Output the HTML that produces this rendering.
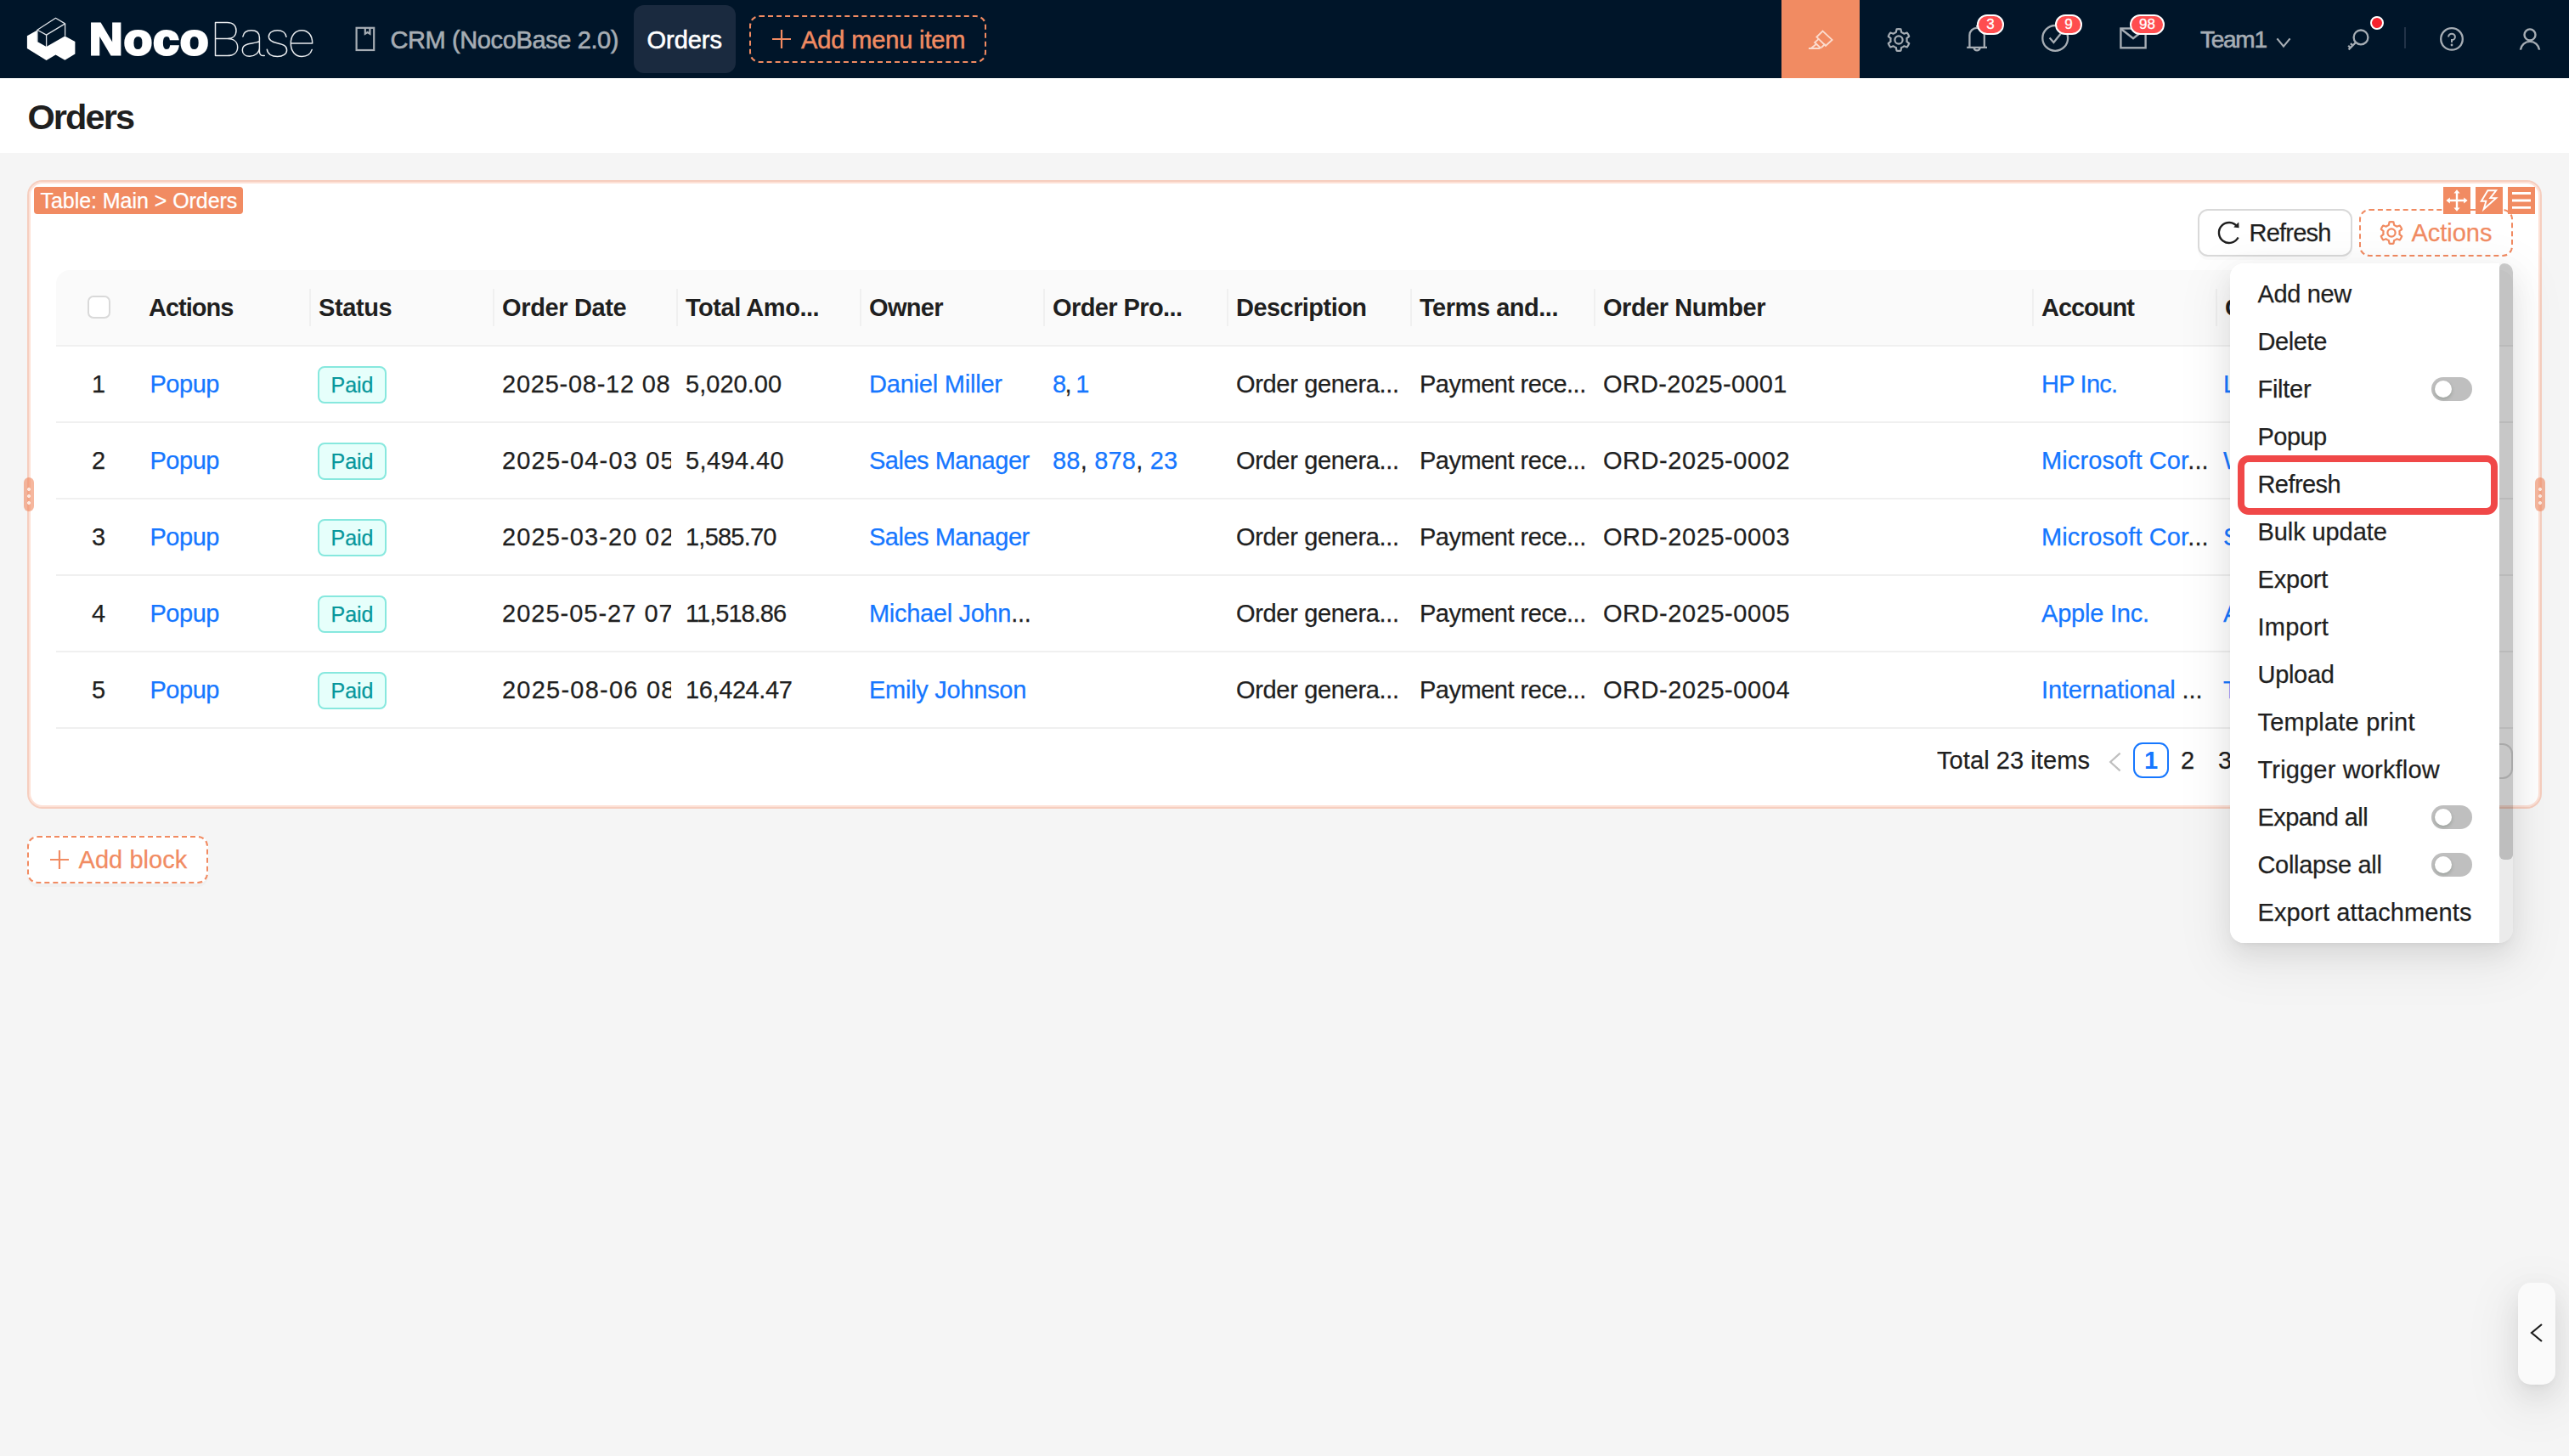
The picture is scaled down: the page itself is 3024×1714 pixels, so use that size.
<!DOCTYPE html>
<html lang="en">
<head>
<meta charset="utf-8">
<title>Orders - NocoBase</title>
<style>
*{box-sizing:border-box;margin:0;padding:0}
html,body{width:3024px;height:1714px;overflow:hidden;background:#f5f5f5;font-family:"Liberation Sans",sans-serif;color:#1f1f1f}
.abs{position:absolute}
.t{position:absolute;white-space:nowrap;-webkit-text-stroke:.25px currentColor}
#hdr{position:absolute;left:0;top:0;width:3024px;height:92px;background:#001529}
.bdg{-webkit-text-stroke:.3px #fff;position:absolute;top:17px;height:24px;border-radius:12px;background:#ff4d4f;border:2px solid #fff;color:#fff;font-size:17px;line-height:20px;text-align:center}
#titlebar{position:absolute;left:0;top:92px;width:3024px;height:88px;background:#fff}
#block{position:absolute;left:32px;top:212px;width:2960px;height:740px;background:#fff;border:2px solid #f6cebf;box-shadow:inset 0 0 0 2px #fde1d6;border-radius:18px}
#tbl{position:absolute;left:66px;top:318px;width:2892px;height:540px;overflow:hidden;border-radius:16px 16px 0 0}
#thead{position:absolute;left:0;top:0;width:2892px;height:90px;background:#fafafa;border-bottom:2px solid #f0f0f0}
.row{position:absolute;left:0;width:2892px;height:90px;border-bottom:2px solid #f0f0f0;background:#fff}
.div{position:absolute;top:22px;width:2px;height:44px;background:#f0f0f0}
.c{position:absolute;white-space:nowrap;overflow:hidden;-webkit-text-stroke:.25px currentColor}
.lnk{color:#1677ff}
.tag{position:absolute;left:308px;top:23px;width:81px;height:44px;border:2px solid #87e8de;background:#e6fffb;border-radius:8px}
#dd{position:absolute;left:2625px;top:310px;width:317px;height:800px;background:#fff;border-radius:16px 0 0 16px;overflow:hidden}
#ddsh{position:absolute;left:2625px;top:310px;width:333px;height:800px;border-radius:16px;box-shadow:0 12px 32px 0 rgba(0,0,0,.08),0 6px 12px -8px rgba(0,0,0,.12),0 18px 56px 16px rgba(0,0,0,.05)}
.sw{position:absolute;left:237px;width:48px;height:28px;border-radius:14px;background:#bfbfbf}
.sw i{position:absolute;left:4px;top:4px;width:20px;height:20px;border-radius:10px;background:#fff;box-shadow:0 2px 4px rgba(0,35,11,.2)}
.hdl{position:absolute;top:562px;width:12px;height:40px;border-radius:6px;background-color:rgba(241,139,98,.62);background-image:radial-gradient(circle 2.2px at 6px 14px,rgba(255,255,255,.75) 85%,transparent),radial-gradient(circle 2.2px at 6px 22px,rgba(255,255,255,.75) 85%,transparent),radial-gradient(circle 2.2px at 6px 30px,rgba(255,255,255,.75) 85%,transparent)}
</style>
</head>
<body>
<div id="hdr">
<svg class="abs" style="left:0;top:0" width="400" height="92" viewBox="0 0 400 92">
<polygon fill="#fff" points="31.9,42.3 43.9,35.4 43.9,48.9 54.6,55 76.4,42.5 88.4,49.1 88.4,63.4 76.4,70.8 65.5,64.6 54.6,71 31.9,57"/>
<g fill="none" stroke="#dfe3e8" stroke-width="1.3" stroke-linejoin="round"><path d="M43.9 35.2 65.5 21.3 76.6 27.9 54.6 41.1Z"/><path d="M54.6 41.1V55M76.6 27.9V42.6M43.9 35.2V48.9"/></g>
<g fill="none" stroke="#e9ecef" stroke-width="1.5" stroke-linecap="round" stroke-linejoin="round">
<path d="M253.5 26.4V65.6M253.5 26.4H267.5C274 26.4 278 30.2 278 36 278 41.8 274 45.6 267.5 45.6H253.5M267.5 45.6C275 45.6 279.7 49.4 279.7 55.6 279.7 61.8 275 65.6 267.5 65.6H253.5"/>
<path d="M285.9 43C286.6 38.4 290.4 35.7 295.8 35.7 301.8 35.7 305.4 38.8 305.4 44.2V60.5C305.4 64 307 65.9 311.3 65.4M305.4 48.6C301.5 50.6 296 50.8 291.5 52 287.4 53.1 285.3 55.4 285.3 58.9 285.3 63.3 288.6 66.2 293.8 66.2 299.8 66.2 305.4 62.3 305.4 56"/>
<path d="M337 43.3C336.4 38.7 332.4 35.7 326.6 35.7 320.5 35.7 316.3 38.7 316.3 43.2 316.3 47.4 319.4 49.3 326.2 50.7 333.9 52.3 337.6 54.2 337.6 59 337.6 63.5 333.2 66.5 326.6 66.5 319.6 66.5 314.9 63.3 314.3 58.2"/>
<path d="M342.3 50.9H367.7C367.7 41.7 362.7 35.7 355.1 35.7 347.4 35.7 342.3 41.9 342.3 51.1 342.3 60.3 347.4 66.5 355.3 66.5 361.3 66.5 365.7 63.4 367.2 58.4"/>
</g></svg>
<div class="t" id="t1" style="left:104.8px;top:18px;font-size:51.5px;line-height:53.5px;color:#fff;font-weight:bold;-webkit-text-stroke:0;line-height:56px;-webkit-text-stroke:3px #fff;transform-origin:0 0;transform:scaleX(1.06);letter-spacing:1.2px;">Noco</div>
<svg class="abs" style="left:416px;top:30px" width="28" height="32" viewBox="0 0 28 32"><g fill="none" stroke="#a6adb4" stroke-width="2.2"><rect x="3.6" y="2.8" width="20.6" height="26.2"/><path d="M13.8 3V9.8L16.6 8 19.4 9.8V3"/></g></svg>
<div class="t" id="t2" style="left:459.5px;top:32px;font-size:29px;line-height:31px;color:#a6adb4;letter-spacing:-0.39px;-webkit-text-stroke:.6px;">CRM (NocoBase 2.0)</div>
<div class="abs" style="left:746px;top:6px;width:120px;height:80px;border-radius:12px;background:#1a2a3f"></div>
<div class="t" id="t3" style="left:761.5px;top:32px;font-size:29px;line-height:31px;color:#fff;letter-spacing:-0.03px;-webkit-text-stroke:.6px;">Orders</div>
<div class="abs" style="left:882px;top:18px;width:279px;height:56px;border:2px dashed #f18b62;border-radius:12px"></div>
<svg class="abs" style="left:906px;top:32px" width="28" height="28" viewBox="0 0 28 28"><path d="M14 3V25M3 14H25" stroke="#f18b62" stroke-width="2.2" fill="none"/></svg>
<div class="t" id="t4" style="left:943px;top:32px;font-size:29px;line-height:31px;color:#f18b62;letter-spacing:-0.13px;-webkit-text-stroke:.5px;">Add menu item</div>
<div class="abs" style="left:2097px;top:0;width:92px;height:92px;background:#f18b62"></div>
<svg class="abs" style="left:2124px;top:30px" width="36" height="32" viewBox="2124 30 36 32"><g fill="none" stroke="#fbdccf" stroke-width="1.9" stroke-linejoin="miter"><path d="M2145.6 36.6 2156.6 46.9 2149 54 2138.4 43.6Z"/><path d="M2140.8 45.9 2136.2 50 2143.6 57"/><path d="M2148.4 51.6 2144 56"/><path d="M2138.2 51.8 2131.6 57M2129 57H2142"/></g></svg>
<svg class="abs" style="left:2221px;top:33px" width="28" height="28" viewBox="0 0 28 28"><g fill="none" stroke="#a6adb4" stroke-width="2.2" stroke-linejoin="round"><path d="M17.13 4.92L16.46 1.34A12.90 12.90 0 0 0 11.54 1.34L10.87 4.92A9.60 9.60 0 0 0 7.70 6.75L4.26 5.54A12.90 12.90 0 0 0 1.80 9.80L4.58 12.17A9.60 9.60 0 0 0 4.58 15.83L1.80 18.20A12.90 12.90 0 0 0 4.26 22.46L7.70 21.25A9.60 9.60 0 0 0 10.87 23.08L11.54 26.66A12.90 12.90 0 0 0 16.46 26.66L17.13 23.08A9.60 9.60 0 0 0 20.30 21.25L23.74 22.46A12.90 12.90 0 0 0 26.20 18.20L23.42 15.83A9.60 9.60 0 0 0 23.42 12.17L26.20 9.80A12.90 12.90 0 0 0 23.74 5.54L20.30 6.75A9.60 9.60 0 0 0 17.13 4.92Z"/><circle cx="14" cy="14" r="4.6"/></g></svg>
<svg class="abs" style="left:2312px;top:26px" width="32" height="38" viewBox="2312 26 32 38"><g fill="none" stroke="#a6adb4" stroke-width="2.3"><path d="M2315.2 55.8H2339M2318.4 55.8V41.5A8.7 8.7 0 0 1 2335.8 41.5V55.8M2327.1 32.8V29.6"/><path d="M2323.6 56.5A3.6 3.8 0 0 0 2330.6 56.5"/></g></svg>
<div class="bdg" style="left:2327px;width:32px">3</div>
<svg class="abs" style="left:2400px;top:26px" width="38" height="38" viewBox="2400 26 38 38"><g fill="none" stroke="#a6adb4" stroke-width="2.3"><circle cx="2419.2" cy="44.9" r="14.9"/><path d="M2412.6 44.6 2417.4 50 2425.6 39.8"/></g></svg>
<div class="bdg" style="left:2419px;width:32px">9</div>
<svg class="abs" style="left:2492px;top:28px" width="38" height="34" viewBox="2492 28 38 34"><g fill="none" stroke="#a6adb4" stroke-width="2.4"><rect x="2496.4" y="33.5" width="29.2" height="22.8"/><path d="M2497 34.3 2511 45.3 2525 34.3"/></g></svg>
<div class="bdg" style="left:2507px;width:41px">98</div>
<div class="t" id="t5" style="left:2590px;top:32px;font-size:28px;line-height:30px;color:#a6adb4;letter-spacing:-1.26px;-webkit-text-stroke:.6px;">Team1</div>
<svg class="abs" style="left:2676px;top:40px" width="24" height="20" viewBox="2676 40 24 20"><path d="M2680.4 45.4 2688 54.6 2695.6 45.4" fill="none" stroke="#a6adb4" stroke-width="2.2"/></svg>
<svg class="abs" style="left:2760px;top:30px" width="34" height="34" viewBox="2760 30 34 34"><g fill="none" stroke="#a6adb4" stroke-width="2.3"><circle cx="2779" cy="43.9" r="8.4"/><path d="M2773 50 2764.6 58.4M2769.4 53.6 2766.9 51.1M2766.7 56.3 2764.2 53.8"/></g></svg>
<div class="abs" style="left:2790px;top:19px;width:16px;height:16px;border-radius:8px;background:#f5222d;border:2px solid #fff"></div>
<div class="abs" style="left:2830px;top:32px;width:2px;height:25px;background:#213247"></div>
<svg class="abs" style="left:2870px;top:30px" width="32" height="32" viewBox="2870 30 32 32"><g fill="none" stroke="#a6adb4" stroke-width="2.3"><circle cx="2886" cy="45.9" r="12.8"/><path d="M2882.1 43.4A3.9 3.7 0 1 1 2886 47.1V50" stroke-width="2"/></g><circle cx="2886" cy="53" r="1.4" fill="#a6adb4"/></svg>
<svg class="abs" style="left:2962px;top:30px" width="32" height="32" viewBox="2962 30 32 32"><g fill="none" stroke="#a6adb4" stroke-width="2.4"><circle cx="2978" cy="40.9" r="6.5"/><path d="M2966.9 58.6A11.2 11.2 0 0 1 2989.1 58.6"/></g></svg>
</div>
<div id="titlebar"></div>
<div class="t" id="t6" style="left:32.5px;top:115.5px;font-size:41.5px;line-height:43.5px;color:#1f1f1f;font-weight:bold;-webkit-text-stroke:0;letter-spacing:-1.92px;">Orders</div>
<div id="block"></div>
<div class="abs" style="left:40px;top:220px;width:246px;height:32px;background:#f18b62;border-radius:4px"></div>
<div class="t" id="t7" style="left:47.5px;top:223px;font-size:25px;line-height:27px;color:#fff;letter-spacing:-0.05px;">Table: Main &gt; Orders</div>
<div class="abs" style="left:2586.5px;top:246px;width:182.5px;height:56px;border:2px solid #d9d9d9;border-radius:12px;background:#fff;box-shadow:0 4px 0 rgba(0,0,0,.02)"></div>
<svg class="abs" style="left:2608px;top:258px" width="32" height="32" viewBox="0 0 32 32"><g fill="none" stroke="#1f1f1f" stroke-width="2.4"><path d="M26.6 21.5A12 12 0 1 1 25.4 8.6"/></g><path d="M21.2 9.4 27.6 10.2 27.2 3.6Z" fill="#1f1f1f"/></svg>
<div class="t" id="t8" style="left:2647.5px;top:259px;font-size:29px;line-height:31px;color:#1f1f1f;letter-spacing:-0.79px;">Refresh</div>
<div class="abs" style="left:2777px;top:246px;width:181px;height:56px;border:2px dashed #f18b62;border-radius:12px;background:#fff"></div>
<svg class="abs" style="left:2801px;top:260px" width="28" height="28" viewBox="0 0 28 28"><g fill="none" stroke="#f18b62" stroke-width="2.2" stroke-linejoin="round"><path d="M17.13 4.92L16.46 1.34A12.90 12.90 0 0 0 11.54 1.34L10.87 4.92A9.60 9.60 0 0 0 7.70 6.75L4.26 5.54A12.90 12.90 0 0 0 1.80 9.80L4.58 12.17A9.60 9.60 0 0 0 4.58 15.83L1.80 18.20A12.90 12.90 0 0 0 4.26 22.46L7.70 21.25A9.60 9.60 0 0 0 10.87 23.08L11.54 26.66A12.90 12.90 0 0 0 16.46 26.66L17.13 23.08A9.60 9.60 0 0 0 20.30 21.25L23.74 22.46A12.90 12.90 0 0 0 26.20 18.20L23.42 15.83A9.60 9.60 0 0 0 23.42 12.17L26.20 9.80A12.90 12.90 0 0 0 23.74 5.54L20.30 6.75A9.60 9.60 0 0 0 17.13 4.92Z"/><circle cx="14" cy="14" r="4.6"/></g></svg>
<div class="t" id="t9" style="left:2838.5px;top:259px;font-size:29px;line-height:31px;color:#f18b62;letter-spacing:-0.02px;">Actions</div>
<div class="abs" style="left:2876px;top:220px;width:32px;height:32px;background:#f18b62"></div>
<div class="abs" style="left:2914px;top:220px;width:32px;height:32px;background:#f18b62"></div>
<div class="abs" style="left:2952px;top:220px;width:32px;height:32px;background:#f18b62"></div>
<svg class="abs" style="left:2876px;top:220px" width="108" height="32" viewBox="2876 220 108 32"><g fill="none" stroke="#fff" stroke-width="2.4"><path d="M2892 226V246M2882 236H2902"/><path d="M2920.8 236.8 2928.4 224.3H2938.2L2931.3 233.1H2938.2L2923.6 246.2 2926.4 236.8Z" stroke-width="1.9"/><path d="M2957 227.5H2979M2957 236H2979M2957 244.4H2979" stroke-width="2.8"/></g><path d="M2892 223.2 2895.6 227.6H2888.4ZM2892 248.8 2895.6 244.4H2888.4ZM2879.4 236 2883.8 232.4V239.6ZM2904.6 236 2900.2 232.4V239.6Z" fill="#fff"/></svg>
<div id="tbl"><div id="thead">
<div class="t" id="t10" style="left:109px;top:29px;font-size:29px;line-height:31px;color:#1f1f1f;font-weight:bold;-webkit-text-stroke:0;letter-spacing:-1.01px;">Actions</div>
<div class="t" id="t11" style="left:309px;top:29px;font-size:29px;line-height:31px;color:#1f1f1f;font-weight:bold;-webkit-text-stroke:0;letter-spacing:-0.41px;">Status</div>
<div class="div" style="left:298px"></div>
<div class="t" id="t12" style="left:525px;top:29px;font-size:29px;line-height:31px;color:#1f1f1f;font-weight:bold;-webkit-text-stroke:0;letter-spacing:-0.35px;">Order Date</div>
<div class="div" style="left:514px"></div>
<div class="t" id="t13" style="left:741px;top:29px;font-size:29px;line-height:31px;color:#1f1f1f;font-weight:bold;-webkit-text-stroke:0;letter-spacing:-0.46px;">Total Amo...</div>
<div class="div" style="left:730px"></div>
<div class="t" id="t14" style="left:957px;top:29px;font-size:29px;line-height:31px;color:#1f1f1f;font-weight:bold;-webkit-text-stroke:0;letter-spacing:-0.66px;">Owner</div>
<div class="div" style="left:946px"></div>
<div class="t" id="t15" style="left:1173px;top:29px;font-size:29px;line-height:31px;color:#1f1f1f;font-weight:bold;-webkit-text-stroke:0;letter-spacing:-0.59px;">Order Pro...</div>
<div class="div" style="left:1162px"></div>
<div class="t" id="t16" style="left:1389px;top:29px;font-size:29px;line-height:31px;color:#1f1f1f;font-weight:bold;-webkit-text-stroke:0;letter-spacing:-0.55px;">Description</div>
<div class="div" style="left:1378px"></div>
<div class="t" id="t17" style="left:1605px;top:29px;font-size:29px;line-height:31px;color:#1f1f1f;font-weight:bold;-webkit-text-stroke:0;letter-spacing:-0.47px;">Terms and...</div>
<div class="div" style="left:1594px"></div>
<div class="t" id="t18" style="left:1821px;top:29px;font-size:29px;line-height:31px;color:#1f1f1f;font-weight:bold;-webkit-text-stroke:0;letter-spacing:-0.46px;">Order Number</div>
<div class="div" style="left:1810px"></div>
<div class="t" id="t19" style="left:2337px;top:29px;font-size:29px;line-height:31px;color:#1f1f1f;font-weight:bold;-webkit-text-stroke:0;letter-spacing:-1.03px;">Account</div>
<div class="div" style="left:2326px"></div>
<div class="t" id="t20" style="left:2553px;top:29px;font-size:29px;line-height:31px;color:#1f1f1f;font-weight:bold;-webkit-text-stroke:0;">Contact</div>
<div class="div" style="left:2542px"></div>
<div class="abs" style="left:37px;top:30px;width:27px;height:27px;border:2px solid #d9d9d9;border-radius:7px;background:#fff"></div>
</div>
<div class="row" style="top:90px">
<div class="t" id="t21" style="left:34px;top:29px;font-size:29px;line-height:31px;width:32px;text-align:center;">1</div>
<div class="t" id="t22" style="left:110.5px;top:29px;font-size:29px;line-height:31px;color:#1677ff;letter-spacing:-0.49px;">Popup</div>
<div class="tag"></div>
<div class="t" id="t23" style="left:308px;top:32px;font-size:25px;line-height:27px;color:#08979c;width:81px;text-align:center;">Paid</div>
<div class="c" id="t24" style="left:525px;top:29px;font-size:29px;line-height:31px;width:198.5px;letter-spacing:0.75px;">2025-08-12 08:00:00</div>
<div class="t" id="t25" style="left:741px;top:29px;font-size:29px;line-height:31px;letter-spacing:0.04px;">5,020.00</div>
<div class="t" id="t26" style="left:957px;top:29px;font-size:29px;line-height:31px;color:#1677ff;letter-spacing:-0.21px;">Daniel Miller</div>
<div class="t" id="t27" style="left:1173px;top:29px;font-size:29px;line-height:31px;letter-spacing:-1.67px;"><span class="lnk">8</span>, <span class="lnk">1</span></div>
<div class="t" id="t28" style="left:1389px;top:29px;font-size:29px;line-height:31px;letter-spacing:-0.33px;">Order genera...</div>
<div class="t" id="t29" style="left:1605px;top:29px;font-size:29px;line-height:31px;letter-spacing:-0.49px;">Payment rece...</div>
<div class="t" id="t30" style="left:1821px;top:29px;font-size:29px;line-height:31px;letter-spacing:0.29px;">ORD-2025-0001</div>
<div class="t" id="t31" style="left:2337px;top:29px;font-size:29px;line-height:31px;color:#1677ff;letter-spacing:-0.74px;">HP Inc.</div>
<div class="t" id="t32" style="left:2551px;top:29px;font-size:29px;line-height:31px;color:#1677ff;">Linda</div>
</div>
<div class="row" style="top:180px">
<div class="t" id="t33" style="left:34px;top:29px;font-size:29px;line-height:31px;width:32px;text-align:center;">2</div>
<div class="t" id="t34" style="left:110.5px;top:29px;font-size:29px;line-height:31px;color:#1677ff;letter-spacing:-0.49px;">Popup</div>
<div class="tag"></div>
<div class="t" id="t35" style="left:308px;top:32px;font-size:25px;line-height:27px;color:#08979c;width:81px;text-align:center;">Paid</div>
<div class="c" id="t36" style="left:525px;top:29px;font-size:29px;line-height:31px;width:198.5px;letter-spacing:1.17px;">2025-04-03 05:00:00</div>
<div class="t" id="t37" style="left:741px;top:29px;font-size:29px;line-height:31px;letter-spacing:0.39px;">5,494.40</div>
<div class="t" id="t38" style="left:957px;top:29px;font-size:29px;line-height:31px;color:#1677ff;letter-spacing:-0.49px;">Sales Manager</div>
<div class="t" id="t39" style="left:1173px;top:29px;font-size:29px;line-height:31px;letter-spacing:0.20px;"><span class="lnk">88</span>, <span class="lnk">878</span>, <span class="lnk">23</span></div>
<div class="t" id="t40" style="left:1389px;top:29px;font-size:29px;line-height:31px;letter-spacing:-0.33px;">Order genera...</div>
<div class="t" id="t41" style="left:1605px;top:29px;font-size:29px;line-height:31px;letter-spacing:-0.49px;">Payment rece...</div>
<div class="t" id="t42" style="left:1821px;top:29px;font-size:29px;line-height:31px;letter-spacing:0.56px;">ORD-2025-0002</div>
<div class="t" id="t43" style="left:2337px;top:29px;font-size:29px;line-height:31px;color:#1677ff;letter-spacing:0.11px;">Microsoft Cor<span style="color:#1f1f1f">...</span></div>
<div class="t" id="t44" style="left:2551px;top:29px;font-size:29px;line-height:31px;color:#1677ff;">William</div>
</div>
<div class="row" style="top:270px">
<div class="t" id="t45" style="left:34px;top:29px;font-size:29px;line-height:31px;width:32px;text-align:center;">3</div>
<div class="t" id="t46" style="left:110.5px;top:29px;font-size:29px;line-height:31px;color:#1677ff;letter-spacing:-0.49px;">Popup</div>
<div class="tag"></div>
<div class="t" id="t47" style="left:308px;top:32px;font-size:25px;line-height:27px;color:#08979c;width:81px;text-align:center;">Paid</div>
<div class="c" id="t48" style="left:525px;top:29px;font-size:29px;line-height:31px;width:198.5px;letter-spacing:1.12px;">2025-03-20 02:00:00</div>
<div class="t" id="t49" style="left:741px;top:29px;font-size:29px;line-height:31px;letter-spacing:-0.78px;">1,585.70</div>
<div class="t" id="t50" style="left:957px;top:29px;font-size:29px;line-height:31px;color:#1677ff;letter-spacing:-0.49px;">Sales Manager</div>
<div class="t" id="t51" style="left:1389px;top:29px;font-size:29px;line-height:31px;letter-spacing:-0.33px;">Order genera...</div>
<div class="t" id="t52" style="left:1605px;top:29px;font-size:29px;line-height:31px;letter-spacing:-0.49px;">Payment rece...</div>
<div class="t" id="t53" style="left:1821px;top:29px;font-size:29px;line-height:31px;letter-spacing:0.56px;">ORD-2025-0003</div>
<div class="t" id="t54" style="left:2337px;top:29px;font-size:29px;line-height:31px;color:#1677ff;letter-spacing:0.11px;">Microsoft Cor<span style="color:#1f1f1f">...</span></div>
<div class="t" id="t55" style="left:2551px;top:29px;font-size:29px;line-height:31px;color:#1677ff;">Sarah</div>
</div>
<div class="row" style="top:360px">
<div class="t" id="t56" style="left:34px;top:29px;font-size:29px;line-height:31px;width:32px;text-align:center;">4</div>
<div class="t" id="t57" style="left:110.5px;top:29px;font-size:29px;line-height:31px;color:#1677ff;letter-spacing:-0.49px;">Popup</div>
<div class="tag"></div>
<div class="t" id="t58" style="left:308px;top:32px;font-size:25px;line-height:27px;color:#08979c;width:81px;text-align:center;">Paid</div>
<div class="c" id="t59" style="left:525px;top:29px;font-size:29px;line-height:31px;width:198.5px;letter-spacing:1.00px;">2025-05-27 07:00:00</div>
<div class="t" id="t60" style="left:741px;top:29px;font-size:29px;line-height:31px;letter-spacing:-0.97px;">11,518.86</div>
<div class="t" id="t61" style="left:957px;top:29px;font-size:29px;line-height:31px;color:#1677ff;letter-spacing:-0.31px;">Michael John<span style="color:#1f1f1f">...</span></div>
<div class="t" id="t62" style="left:1389px;top:29px;font-size:29px;line-height:31px;letter-spacing:-0.33px;">Order genera...</div>
<div class="t" id="t63" style="left:1605px;top:29px;font-size:29px;line-height:31px;letter-spacing:-0.49px;">Payment rece...</div>
<div class="t" id="t64" style="left:1821px;top:29px;font-size:29px;line-height:31px;letter-spacing:0.56px;">ORD-2025-0005</div>
<div class="t" id="t65" style="left:2337px;top:29px;font-size:29px;line-height:31px;color:#1677ff;letter-spacing:-0.21px;">Apple Inc.</div>
<div class="t" id="t66" style="left:2551px;top:29px;font-size:29px;line-height:31px;color:#1677ff;">Anna</div>
</div>
<div class="row" style="top:450px">
<div class="t" id="t67" style="left:34px;top:29px;font-size:29px;line-height:31px;width:32px;text-align:center;">5</div>
<div class="t" id="t68" style="left:110.5px;top:29px;font-size:29px;line-height:31px;color:#1677ff;letter-spacing:-0.49px;">Popup</div>
<div class="tag"></div>
<div class="t" id="t69" style="left:308px;top:32px;font-size:25px;line-height:27px;color:#08979c;width:81px;text-align:center;">Paid</div>
<div class="c" id="t70" style="left:525px;top:29px;font-size:29px;line-height:31px;width:198.5px;letter-spacing:1.23px;">2025-08-06 08:00:00</div>
<div class="t" id="t71" style="left:741px;top:29px;font-size:29px;line-height:31px;letter-spacing:-0.39px;">16,424.47</div>
<div class="t" id="t72" style="left:957px;top:29px;font-size:29px;line-height:31px;color:#1677ff;letter-spacing:-0.27px;">Emily Johnson</div>
<div class="t" id="t73" style="left:1389px;top:29px;font-size:29px;line-height:31px;letter-spacing:-0.33px;">Order genera...</div>
<div class="t" id="t74" style="left:1605px;top:29px;font-size:29px;line-height:31px;letter-spacing:-0.49px;">Payment rece...</div>
<div class="t" id="t75" style="left:1821px;top:29px;font-size:29px;line-height:31px;letter-spacing:0.56px;">ORD-2025-0004</div>
<div class="t" id="t76" style="left:2337px;top:29px;font-size:29px;line-height:31px;color:#1677ff;letter-spacing:-0.15px;">International <span style="color:#1f1f1f">...</span></div>
<div class="t" id="t77" style="left:2551px;top:29px;font-size:29px;line-height:31px;color:#1677ff;">Tom</div>
</div>
</div>
<div class="t" id="t78" style="left:2280px;top:880px;font-size:29px;line-height:31px;letter-spacing:0.08px;">Total 23 items</div>
<svg class="abs" style="left:2478px;top:881px" width="24" height="32" viewBox="0 0 24 32"><path d="M17.6 5.6 6.2 16 17.6 26.4" fill="none" stroke="#bfbfbf" stroke-width="2.2"/></svg>
<div class="abs" style="left:2511px;top:874px;width:42px;height:42px;border:2px solid #1677ff;border-radius:11px;background:#fff"></div>
<div class="t" id="t79" style="left:2511px;top:880px;font-size:29px;line-height:31px;color:#1677ff;font-weight:bold;-webkit-text-stroke:0;width:42px;text-align:center;">1</div>
<div class="t" id="t80" style="left:2554px;top:880px;font-size:29px;line-height:31px;width:42px;text-align:center;">2</div>
<div class="t" id="t81" style="left:2598px;top:880px;font-size:29px;line-height:31px;width:42px;text-align:center;">3</div>
<div class="abs" style="left:2780px;top:875px;width:178px;height:42px;border:2px solid #d9d9d9;border-radius:12px;background:#fff"></div>
<div class="abs" style="left:32px;top:984px;width:213px;height:56px;border:2px dashed #f18b62;border-radius:12px;background:#fff;box-shadow:0 4px 0 rgba(0,0,0,.02)"></div>
<svg class="abs" style="left:56px;top:998px" width="28" height="28" viewBox="0 0 28 28"><path d="M14 3V25M3 14H25" stroke="#f18b62" stroke-width="2.2" fill="none"/></svg>
<div class="t" id="t82" style="left:92.5px;top:997px;font-size:29px;line-height:31px;color:#f18b62;letter-spacing:0.06px;">Add block</div>
<div class="hdl" style="left:28px"></div><div class="hdl" style="left:2984px"></div>
<div id="ddsh"></div><div id="dd">
<div class="t" id="t83" style="left:32.5px;top:21px;font-size:29px;line-height:31px;color:#1f1f1f;letter-spacing:-0.34px;">Add new</div>
<div class="t" id="t84" style="left:32.5px;top:77px;font-size:29px;line-height:31px;color:#1f1f1f;letter-spacing:-0.41px;">Delete</div>
<div class="t" id="t85" style="left:32.5px;top:133px;font-size:29px;line-height:31px;color:#1f1f1f;letter-spacing:-0.27px;">Filter</div>
<div class="sw" style="top:134px"><i></i></div>
<div class="t" id="t86" style="left:32.5px;top:189px;font-size:29px;line-height:31px;color:#1f1f1f;letter-spacing:-0.54px;">Popup</div>
<div class="t" id="t87" style="left:32.5px;top:245px;font-size:29px;line-height:31px;color:#1f1f1f;letter-spacing:-0.57px;">Refresh</div>
<div class="t" id="t88" style="left:32.5px;top:301px;font-size:29px;line-height:31px;color:#1f1f1f;letter-spacing:-0.09px;">Bulk update</div>
<div class="t" id="t89" style="left:32.5px;top:357px;font-size:29px;line-height:31px;color:#1f1f1f;letter-spacing:-0.19px;">Export</div>
<div class="t" id="t90" style="left:32.5px;top:413px;font-size:29px;line-height:31px;color:#1f1f1f;letter-spacing:0.24px;">Import</div>
<div class="t" id="t91" style="left:32.5px;top:469px;font-size:29px;line-height:31px;color:#1f1f1f;letter-spacing:-0.30px;">Upload</div>
<div class="t" id="t92" style="left:32.5px;top:525px;font-size:29px;line-height:31px;color:#1f1f1f;letter-spacing:0.22px;">Template print</div>
<div class="t" id="t93" style="left:32.5px;top:581px;font-size:29px;line-height:31px;color:#1f1f1f;letter-spacing:0.17px;">Trigger workflow</div>
<div class="t" id="t94" style="left:32.5px;top:637px;font-size:29px;line-height:31px;color:#1f1f1f;letter-spacing:-0.59px;">Expand all</div>
<div class="sw" style="top:638px"><i></i></div>
<div class="t" id="t95" style="left:32.5px;top:693px;font-size:29px;line-height:31px;color:#1f1f1f;letter-spacing:-0.32px;">Collapse all</div>
<div class="sw" style="top:694px"><i></i></div>
<div class="t" id="t96" style="left:32.5px;top:749px;font-size:29px;line-height:31px;color:#1f1f1f;letter-spacing:0.13px;">Export attachments</div>
<div class="abs" style="left:9px;top:226px;width:306px;height:70px;border:8px solid #f04848;border-radius:13px"></div>
</div>
<div class="abs" style="left:2942px;top:310px;width:16px;height:800px;background:rgba(0,0,0,.04);border-radius:0 16px 16px 0"></div>
<div class="abs" style="left:2942px;top:310px;width:16px;height:702px;background:rgba(0,0,0,.19);border-radius:8px 14px 8px 8px"></div>
<div class="abs" style="left:2964px;top:1510px;width:44px;height:120px;border-radius:15px;background:#fafafa;box-shadow:0 12px 32px 0 rgba(0,0,0,.08),0 6px 12px -8px rgba(0,0,0,.12),0 18px 56px 16px rgba(0,0,0,.05)"></div>
<svg class="abs" style="left:2974px;top:1554px" width="24" height="30" viewBox="0 0 24 30"><path d="M18 5 6 15 18 25" fill="none" stroke="#1f1f1f" stroke-width="2.2"/></svg>
</body>
</html>
